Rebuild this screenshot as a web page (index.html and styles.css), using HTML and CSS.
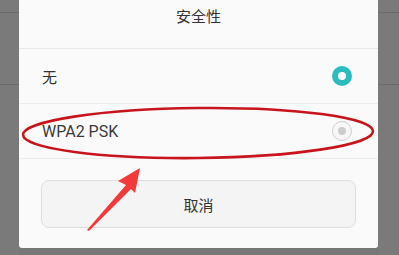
FILE: index.html
```html
<!DOCTYPE html>
<html lang="zh">
<head>
<meta charset="utf-8">
<link rel="stylesheet" href="styles.css">
</head>
<body>
<div class="screen">
  <div class="strip strip-left"><div class="seg seg-a"></div><div class="seg seg-b"></div></div>
  <div class="dialog">
    <div class="title">安全性</div>
    <div class="row">
      <span class="label">无</span>
      <span class="radio radio-on"></span>
    </div>
    <div class="row">
      <span class="label latin">WPA2 PSK</span>
      <span class="radio radio-off"></span>
    </div>
    <div class="actions">
      <div class="btn">取消</div>
    </div>
  </div>
  <div class="strip strip-right"><div class="seg seg-a"></div><div class="seg seg-b"></div></div>
  <svg class="annot" width="399" height="255" viewBox="0 0 399 255">
    <ellipse cx="198" cy="133" rx="175" ry="25" fill="none" stroke="#c8141c" stroke-width="2.6" transform="rotate(-0.6 198 133)"/>
    <polygon points="140,168 118,181 126,185 87,230 89,231 131,189 135,193" fill="#f23a3a"/>
  </svg>
</div>
</body>
</html>
```
FILE: styles.css
```css
html, body {
  margin: 0;
  padding: 0;
}
body {
  width: 399px;
  height: 255px;
  overflow: hidden;
  background: #777777;
  font-family: "Noto Sans CJK SC", Roboto, sans-serif;
}
.screen {
  position: relative;
  display: flex;
  width: 399px;
  height: 255px;
}
.strip {
  background: #7a7a7a;
  display: flex;
  flex-direction: column;
}
.strip-left { width: 19px; }
.strip-right { width: 21px; }
.seg { border-bottom: 1px solid #6a6a6a; }
.seg-a { height: 12px; }
.seg-b { height: 71px; }
.dialog {
  width: 359px;
  height: 248px;
  background: #fafafa;
  border-radius: 0 0 3px 3px;
  display: flex;
  flex-direction: column;
}
.title {
  border-bottom: 1px solid #e8e8e8;
  display: flex;
  justify-content: center;
  padding-top: 5px;
  box-sizing: border-box;
  height: 49px;
  font-size: 15px;
  color: #333;
  line-height: 22px;
}
.row {
  height: 55px;
  box-sizing: border-box;
  border-bottom: 1px solid #ececec;
  display: flex;
  align-items: center;
  justify-content: space-between;
  padding: 0 26px 0 23px;
}
.label {
  font-size: 15px;
  color: #333;
}
.latin {
  font-family: Roboto, "Noto Sans CJK SC", sans-serif;
  font-size: 16px;
  color: #3a3a3a;
}
.radio {
  width: 20px;
  height: 20px;
  box-sizing: border-box;
  border-radius: 50%;
  display: flex;
  align-items: center;
  justify-content: center;
}
.radio-on {
  background: #2bbdbd;
}
.radio-on::after {
  content: "";
  width: 8px;
  height: 8px;
  border-radius: 50%;
  background: #fff;
}
.radio-off {
  border: 1px solid #cfcfcf;
  background: #f7f7f7;
}
.radio-off::after {
  content: "";
  width: 8px;
  height: 8px;
  border-radius: 50%;
  background: #cdcdcd;
}
.actions {
  padding: 21px 22px 0 22px;
}
.btn {
  height: 48px;
  box-sizing: border-box;
  border: 1px solid #dedede;
  border-radius: 8px;
  background: #f4f4f4;
  display: flex;
  align-items: center;
  justify-content: center;
  font-size: 15px;
  color: #333;
}
.annot {
  position: absolute;
  left: 0;
  top: 0;
  pointer-events: none;
}
```
